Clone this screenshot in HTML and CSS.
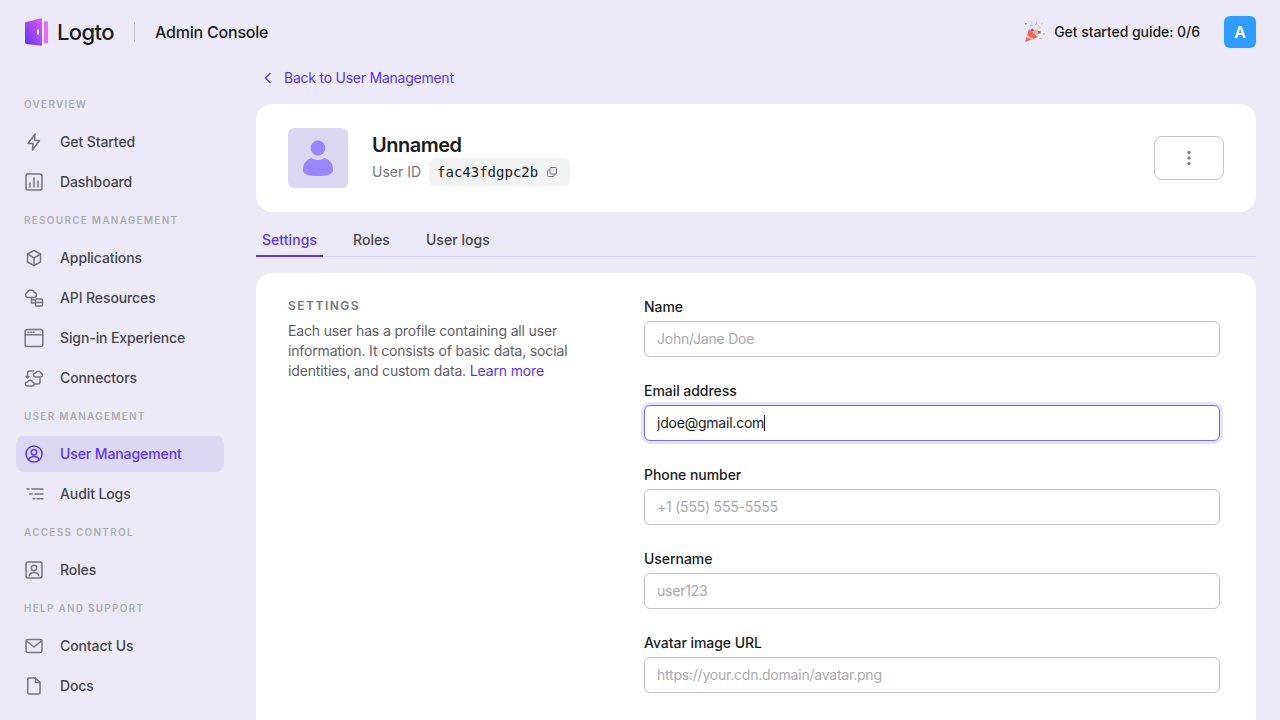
FILE: index.html
```html
<!DOCTYPE html>
<html lang="en">
<head>
    <meta charset="UTF-8">
    <meta name="viewport" content="width=device-width, initial-scale=1.0">
    <title>Logto Admin Console</title>
    <link rel="stylesheet" href="styles.css">
</head>
<body>
    <header class="topbar">
        <div class="brand">
            <svg class="logo-mark" width="24" height="28" viewBox="0 0 24 28">
                <defs>
                    <linearGradient id="doorFill" x1="0" y1="1" x2="1" y2="0">
                        <stop offset="0" stop-color="#5d34f2"/>
                        <stop offset="1" stop-color="#e45cf0"/>
                    </linearGradient>
                </defs>
                <path d="M1 5.5 Q1 4.3 2.2 4 L17 .3 Q18 .1 18 1.2 V26.8 Q18 27.9 17 27.7 L2.2 26 Q1 25.8 1 24.6 Z" fill="url(#doorFill)"/>
                <rect x="13" y="11.5" width="2" height="5" fill="#fff"/>
                <path d="M20 3.5 L23 3.2 Q24 3.2 24 4.2 V24.8 Q24 25.6 23 25.6 L20 25.2 Z" fill="#e66cf2"/>
            </svg>
            <span class="logo-text">Logto</span>
            <span class="brand-divider"></span>
            <span class="brand-title">Admin Console</span>
        </div>
        <div class="topbar-right">
            <svg class="popper" width="22" height="22" viewBox="0 0 22 22">
                <path d="M1 21 L5 8 L14 16 Z" fill="#f2635f"/>
                <path d="M3.2 14 L9.5 17.6 L7 18.6 L2.4 16.4 Z" fill="#ffb3a8"/>
                <path d="M6 9 L8.5 7.5 L11 10 L8 10.5 Z" fill="#7d57e8"/>
                <circle cx="12" cy="11" r="2.6" fill="#f5b94c"/>
                <rect x="14" y="10" width="2.6" height="2.6" fill="#7c5cff"/>
                <rect x="19" y="12" width="2" height="2" fill="#f7c35a"/>
                <rect x="1" y="2" width="1.6" height="1.6" fill="#5cae6a"/>
                <rect x="6" y="3.5" width="2.4" height="1.6" fill="#a9d8b4"/>
                <rect x="15" y="5.5" width="2" height="2" fill="#f8dc62"/>
                <path d="M11.5 4 L13 .6" stroke="#b9a7f5" stroke-width="1" fill="none"/>
                <path d="M17 3 L19 2.4" stroke="#cfcfd8" stroke-width="1" fill="none"/>
                <path d="M15 17.5 Q17 16.5 18 18" stroke="#f3a6a0" stroke-width="1" fill="none"/>
            </svg>
            <span class="guide-text">Get started guide: 0/6</span>
            <div class="user-badge">A</div>
        </div>
    </header>

    <div class="layout">
        <nav class="sidebar">
            <div class="nav-title">Overview</div>
            <a class="nav-item">
                <svg class="nav-icon" viewBox="0 0 20 20"><path d="M11 2 L4 11.5 H9 L8.5 18 L15.5 8.5 H10.5 Z"/></svg>
                Get Started
            </a>
            <a class="nav-item">
                <svg class="nav-icon" viewBox="0 0 20 20"><rect x="2" y="2" width="16" height="16" rx="2"/><path d="M6 15 V11 M10 15 V6 M14 15 V9"/></svg>
                Dashboard
            </a>

            <div class="nav-title">Resource Management</div>
            <a class="nav-item">
                <svg class="nav-icon" viewBox="0 0 20 20"><path d="M10 2.5 L16.5 6 V14 L10 17.5 L3.5 14 V6 Z"/><path d="M3.5 6 L10 10 L16.5 6 M10 10 V17.5"/></svg>
                Applications
            </a>
            <a class="nav-item">
                <svg class="nav-icon" viewBox="0 0 20 20"><path d="M4 9.5 A2.5 2.5 0 0 1 3.4 4.6 A3.6 3.6 0 0 1 10.2 4.4 A2.6 2.6 0 0 1 10.5 9.5 Z"/><path d="M7.5 9.5 V15 H11.5 M7.5 12 H11.5"/><rect x="11.5" y="11" width="7" height="7" rx="1"/><path d="M11.5 14.5 H18.5"/></svg>
                API Resources
            </a>
            <a class="nav-item">
                <svg class="nav-icon" viewBox="0 0 20 20"><rect x="1.2" y="1.5" width="17.6" height="17" rx="2"/><path d="M1.2 6.8 H18.8"/><path d="M4 4.2 H4.8 M6.6 4.2 H7.4 M9.2 4.2 H10"/></svg>
                Sign-in Experience
            </a>
            <a class="nav-item">
                <svg class="nav-icon" viewBox="0 0 20 20"><path d="M11.5 9 A2 2 0 0 1 11.6 5 A3 3 0 0 1 17 5 A2.1 2.1 0 0 1 17 9 Z"/><path d="M3.5 18 A2 2 0 0 1 3.4 14 A3 3 0 0 1 8.8 14 A2.1 2.1 0 0 1 8.8 18 Z"/><path d="M9.5 3 H5.5 Q3.5 3 3.5 5 V10 M3.5 10 L2 8.5 M3.5 10 L5 8.5"/><path d="M11 16 H14 Q16 16 16 14 V10"/></svg>
                Connectors
            </a>

            <div class="nav-title">User Management</div>
            <a class="nav-item nav-item-active">
                <svg class="nav-icon" viewBox="0 0 20 20"><circle cx="10" cy="10" r="8"/><circle cx="10" cy="8.2" r="2.7"/><path d="M4.8 15.8 Q6 12.6 10 12.6 Q14 12.6 15.2 15.8"/></svg>
                User Management
            </a>
            <a class="nav-item">
                <svg class="nav-icon" viewBox="0 0 20 20"><path d="M8 5 H19 M11 10 H19 M13 14.7 H19"/><path d="M3 5 H5 M5.5 10 H8 M9 14.7 H11"/></svg>
                Audit Logs
            </a>

            <div class="nav-title">Access Control</div>
            <a class="nav-item">
                <svg class="nav-icon" viewBox="0 0 20 20"><rect x="2" y="2" width="16" height="16" rx="2"/><circle cx="10" cy="8" r="2.7"/><path d="M5.2 15.5 Q6 12.4 10 12.4 Q14 12.4 14.8 15.5"/></svg>
                Roles
            </a>

            <div class="nav-title">Help and Support</div>
            <a class="nav-item">
                <svg class="nav-icon" viewBox="0 0 20 20"><rect x="2" y="3.5" width="16" height="13" rx="2"/><path d="M2.5 5 L10 11 L17.5 5"/></svg>
                Contact Us
            </a>
            <a class="nav-item">
                <svg class="nav-icon" viewBox="0 0 20 20"><path d="M5 2 H11.5 L16 6.5 V16.8 Q16 18 14.8 18 H5 Q3.8 18 3.8 16.8 V3.2 Q3.8 2 5 2 Z"/><path d="M11.5 2 V6.5 H16"/></svg>
                Docs
            </a>
        </nav>

        <main class="content">
            <a class="back-link">
                <svg width="16" height="16" viewBox="0 0 16 16"><path d="M10 3.5 L5.5 8 L10 12.5"/></svg>
                <span>Back to User Management</span>
            </a>

            <section class="card user-card">
                <div class="avatar">
                    <svg width="32" height="36" viewBox="0 0 32 36"><circle cx="16" cy="8" r="7.4"/><path d="M1 30 Q1 21 9 18 Q16 22 23 18 Q31 21 31 30 Q31 36 16 36 Q1 36 1 30 Z"/></svg>
                </div>
                <div class="user-meta">
                    <div class="user-name">Unnamed</div>
                    <div class="user-id-row">
                        <span class="user-id-label">User ID</span>
                        <span class="copy-id">
                            fac43fdgpc2b
                            <svg width="12" height="12" viewBox="0 0 12 12"><rect x="4" y="1.5" width="6.5" height="6.5" rx="1"/><path d="M4 4 H2.5 Q1.5 4 1.5 5 V9.5 Q1.5 10.5 2.5 10.5 H7 Q8 10.5 8 9.5 V8"/></svg>
                        </span>
                    </div>
                </div>
                <button class="more-button">
                    <svg width="4" height="16" viewBox="0 0 4 16"><circle cx="2" cy="2.4" r="1.6"/><circle cx="2" cy="8" r="1.6"/><circle cx="2" cy="13.6" r="1.6"/></svg>
                </button>
            </section>

            <div class="tabs">
                <a class="tab tab-active">Settings</a>
                <a class="tab">Roles</a>
                <a class="tab">User logs</a>
            </div>

            <section class="card settings-card">
                <div class="settings-intro">
                    <div class="settings-title">Settings</div>
                    <p class="settings-desc">Each user has a profile containing all user information. It consists of basic data, social identities, and custom data. <a class="learn-more">Learn more</a></p>
                </div>
                <form class="settings-form">
                    <div class="field">
                        <label class="field-label">Name</label>
                        <input class="text-input" type="text" placeholder="John/Jane Doe">
                    </div>
                    <div class="field">
                        <label class="field-label">Email address</label>
                        <div class="text-input text-input-focused">jdoe@gmail.com<span class="caret"></span></div>
                    </div>
                    <div class="field">
                        <label class="field-label">Phone number</label>
                        <input class="text-input" type="text" placeholder="+1 (555) 555-5555">
                    </div>
                    <div class="field">
                        <label class="field-label">Username</label>
                        <input class="text-input" type="text" placeholder="user123">
                    </div>
                    <div class="field">
                        <label class="field-label">Avatar image URL</label>
                        <input class="text-input" type="text" placeholder="https://your.cdn.domain/avatar.png">
                    </div>
                </form>
            </section>
        </main>
    </div>
</body>
</html>
```

FILE: styles.css
```css
* {
    box-sizing: border-box;
}

html, body {
    height: 720px;
    overflow: hidden;
}

body {
    margin: 0;
    background-color: #eceaf6;
    color: #191c1d;
    font-family: Inter, "Noto Sans", sans-serif;
    font-size: 14px;
    line-height: 20px;
    letter-spacing: -0.15px;
}

.topbar {
    height: 64px;
    padding: 0 24px;
    display: flex;
    align-items: center;
    justify-content: space-between;
}

.brand {
    display: flex;
    align-items: center;
}

.logo-mark {
    display: block;
}

.logo-text {
    margin-left: 9px;
    font-size: 22px;
    font-weight: 500;
    letter-spacing: -0.6px;
}

.brand-divider {
    width: 1px;
    height: 20px;
    margin: 0 20px;
    background-color: #c4c4cc;
}

.brand-title {
    font-size: 16px;
    font-weight: 500;
    line-height: 24px;
    letter-spacing: -0.2px;
}

.topbar-right {
    display: flex;
    align-items: center;
}

.guide-text {
    margin-left: 8px;
    font-weight: 450;
    letter-spacing: -0.05px;
}

.user-badge {
    width: 32px;
    height: 32px;
    margin-left: 24px;
    border-radius: 6px;
    background-color: #2f9dff;
    color: #fff;
    font-size: 16px;
    font-weight: 600;
    line-height: 32px;
    text-align: center;
}

.layout {
    display: flex;
}

.sidebar {
    width: 256px;
    flex-shrink: 0;
    padding: 20px 32px 0 16px;
}

.nav-title {
    margin: 12px 0 12px 8px;
    color: #aeaeb8;
    font-size: 10px;
    font-weight: 600;
    line-height: 16px;
    letter-spacing: 1.25px;
    text-transform: uppercase;
}

.nav-item {
    height: 36px;
    margin-bottom: 4px;
    padding: 0 8px;
    display: flex;
    align-items: center;
    gap: 16px;
    border-radius: 8px;
    color: #47464e;
    font-weight: 450;
    letter-spacing: -0.1px;
}

.nav-item-active {
    background-color: #dcd8f4;
    color: #5d34f2;
}

.nav-icon {
    width: 20px;
    height: 20px;
    flex-shrink: 0;
    fill: none;
    stroke: #787681;
    stroke-width: 1.5;
    stroke-linejoin: round;
    stroke-linecap: round;
}

.nav-item-active .nav-icon {
    stroke: #5d34f2;
}

.content {
    flex: 1;
    min-width: 0;
    padding-right: 24px;
}

.back-link {
    height: 28px;
    margin-bottom: 12px;
    padding-left: 4px;
    display: flex;
    align-items: center;
    gap: 8px;
    color: #5d34f2;
    letter-spacing: -0.24px;
}

.back-link svg {
    fill: none;
    stroke: #5d34f2;
    stroke-width: 1.5;
    stroke-linecap: round;
    stroke-linejoin: round;
}

.card {
    background-color: #fff;
    border-radius: 16px;
}

.user-card {
    height: 108px;
    padding: 24px 32px;
    display: flex;
    align-items: center;
}

.avatar {
    width: 60px;
    height: 60px;
    display: flex;
    align-items: center;
    justify-content: center;
    border-radius: 6px;
    background-color: #dcd8f4;
}

.avatar svg {
    fill: #9b85ff;
}

.user-meta {
    margin-left: 24px;
    flex: 1;
}

.user-name {
    margin-bottom: -2px;
    font-size: 20px;
    font-weight: 600;
    line-height: 30px;
    letter-spacing: -0.5px;
}

.user-id-row {
    display: flex;
    align-items: center;
    gap: 8px;
}

.user-id-label {
    color: #787681;
    letter-spacing: 0;
}

.copy-id {
    height: 28px;
    padding: 0 12px 0 8px;
    display: flex;
    align-items: center;
    gap: 8px;
    border-radius: 6px;
    background-color: #f1f2f2;
    color: #191c1d;
    font-family: "DejaVu Sans Mono", monospace;
    letter-spacing: 0;
}

.copy-id svg {
    fill: none;
    stroke: #787681;
    stroke-width: 1;
}

.more-button {
    width: 70px;
    height: 44px;
    display: flex;
    align-items: center;
    justify-content: center;
    border: 1px solid #c4c4c8;
    border-radius: 8px;
    background-color: #fff;
}

.more-button svg {
    fill: #74777a;
}

.tabs {
    height: 45px;
    margin-bottom: 16px;
    display: flex;
    align-items: flex-end;
    gap: 24px;
    border-bottom: 1px solid #d8d2f6;
}

.tab {
    height: 36px;
    margin-bottom: -1px;
    padding: 0 6px;
    color: #47464e;
    font-weight: 450;
    line-height: 38px;
    letter-spacing: 0.05px;
}

.tab-active {
    border-bottom: 2px solid #5d34f2;
    color: #5d34f2;
}

.settings-card {
    height: 600px;
    padding: 24px 36px 24px 32px;
    display: grid;
    grid-template-columns: 292px 1fr;
    column-gap: 64px;
}

.settings-title {
    color: #74747e;
    font-size: 12px;
    font-weight: 600;
    line-height: 18px;
    letter-spacing: 1.5px;
    text-transform: uppercase;
}

.settings-desc {
    margin: 6px 0 0;
    color: #5f5e68;
}

.learn-more {
    color: #5d34f2;
}

.field {
    margin-bottom: 24px;
}

.field-label {
    display: block;
    margin-bottom: 4px;
    font-weight: 450;
    letter-spacing: -0.05px;
}

.text-input {
    display: block;
    width: 100%;
    height: 36px;
    padding: 0 12px 2px;
    border: 1px solid #c4c4c8;
    border-radius: 6px;
    background-color: #fff;
    color: #191c1d;
    font-family: inherit;
    font-size: 14px;
    line-height: 34px;
    letter-spacing: -0.22px;
    outline: none;
}

.text-input::placeholder {
    color: #a9a9b0;
    opacity: 1;
}

.text-input-focused {
    padding-bottom: 0;
    border-color: #7d68e8;
    box-shadow: 0 0 0 3px #e6e2fa;
}

.caret {
    display: inline-block;
    width: 1px;
    height: 16px;
    margin-right: -1px;
    vertical-align: -3px;
    background-color: #191c1d;
}
```
